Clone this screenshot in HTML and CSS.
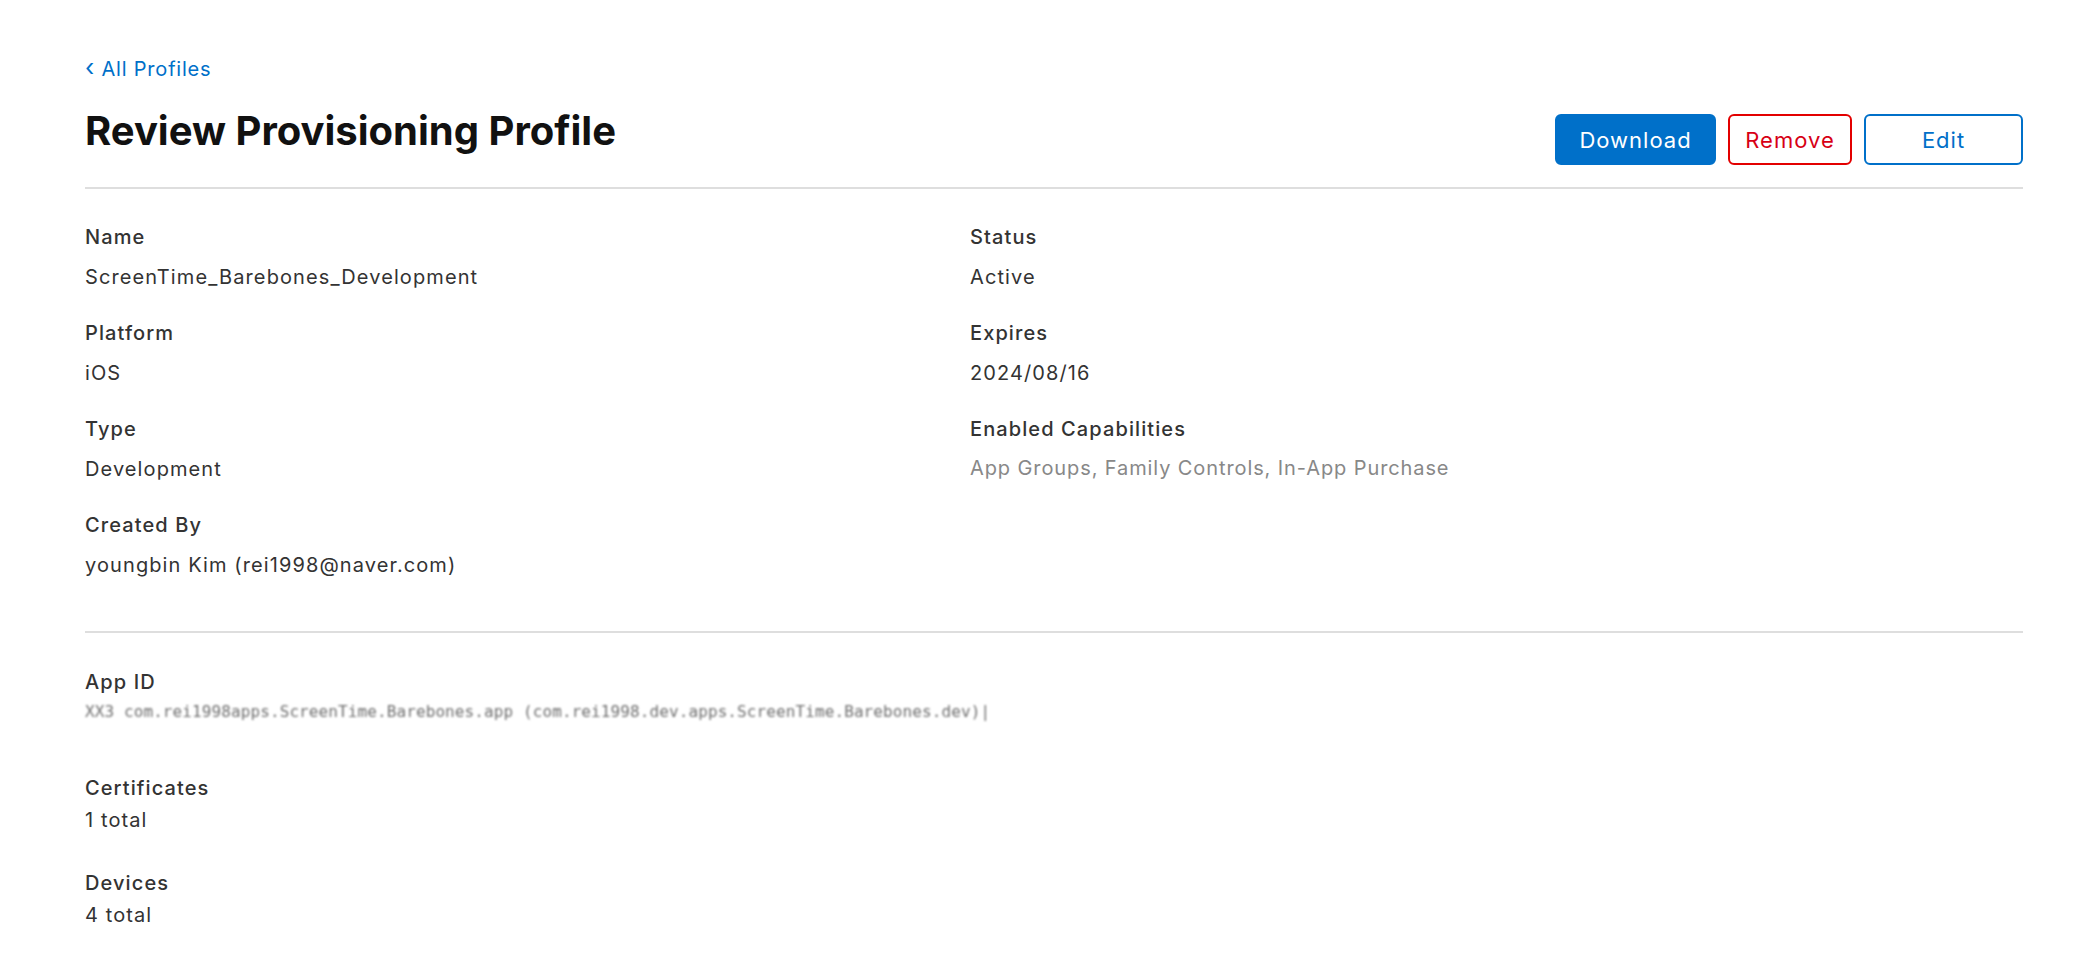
FILE: index.html
```html
<!DOCTYPE html>
<html lang="en">
<head>
<meta charset="utf-8">
<title>Review Provisioning Profile</title>
<link rel="stylesheet" href="styles.css">
</head>
<body>
<main class="page">
  <nav class="back"><a href="#" class="back-link"><span class="chev">&#8249;</span> All Profiles</a></nav>
  <header class="header">
    <h1 class="title">Review Provisioning Profile</h1>
    <div class="actions">
      <button class="btn btn-primary">Download</button>
      <button class="btn btn-danger">Remove</button>
      <button class="btn btn-secondary">Edit</button>
    </div>
  </header>
  <section class="details">
    <div class="col col-left">
      <div class="field"><div class="label">Name</div><div class="value">ScreenTime_Barebones_Development</div></div>
      <div class="field"><div class="label">Platform</div><div class="value">iOS</div></div>
      <div class="field"><div class="label">Type</div><div class="value">Development</div></div>
      <div class="field"><div class="label">Created By</div><div class="value">youngbin Kim (rei1998@naver.com)</div></div>
    </div>
    <div class="col col-right">
      <div class="field"><div class="label">Status</div><div class="value">Active</div></div>
      <div class="field"><div class="label">Expires</div><div class="value">2024/08/16</div></div>
      <div class="field"><div class="label">Enabled Capabilities</div><div class="value value-muted">App Groups, Family Controls, In-App Purchase</div></div>
    </div>
  </section>
  <section class="resources">
    <div class="res res-appid"><div class="label">App ID</div><div class="value value-redacted">XX3 com.rei1998apps.ScreenTime.Barebones.app (com.rei1998.dev.apps.ScreenTime.Barebones.dev)|</div></div>
    <div class="res"><div class="label">Certificates</div><div class="value">1 total</div></div>
    <div class="res"><div class="label">Devices</div><div class="value">4 total</div></div>
  </section>
</main>
</body>
</html>
```

FILE: styles.css
```css
* { box-sizing: border-box; }
html, body { margin: 0; padding: 0; background: #fff; }
body {
  font-family: Inter, "Noto Sans", "Liberation Sans", sans-serif;
  color: #333;
  -webkit-font-smoothing: antialiased;
}
.page {
  padding: 56px 57px 40px 85px;
}
.back {
  height: 24px;
  line-height: 24px;
  font-size: 20px;
  letter-spacing: 0.8px;
}
.back-link {
  color: #0070c9;
  text-decoration: none;
}
.chev {
  font-size: 24px;
  margin-right: 0;
}
.header {
  display: flex;
  justify-content: space-between;
  align-items: flex-start;
  margin-top: 29px;
  padding-bottom: 22px;
  border-bottom: 2px solid #dedede;
}
.title {
  margin: 0;
  font-size: 40px;
  line-height: 44px;
  font-weight: 700;
  color: #111;
  letter-spacing: 0;
}
.actions {
  display: flex;
  gap: 12px;
  margin-top: 5px;
}
.btn {
  height: 51px;
  border-radius: 6px;
  font-family: inherit;
  font-size: 22px;
  letter-spacing: 1px;
  background: #fff;
  border: 2px solid #0070c9;
  color: #0070c9;
  padding: 0 10px;
  cursor: pointer;
}
.btn-primary {
  width: 161px;
  background: #0070c9;
  color: #fff;
}
.btn-danger {
  width: 124px;
  border-color: #e30000;
  color: #d70015;
}
.btn-secondary {
  width: 159px;
}
.details {
  display: grid;
  grid-template-columns: 885px 1fr;
  padding-top: 36px;
  padding-bottom: 22px;
  border-bottom: 2px solid #dedede;
}
.field {
  margin-bottom: 32px;
}
.label {
  font-size: 20px;
  line-height: 24px;
  font-weight: 500;
  letter-spacing: 1.1px;
  color: #333;
}
.value {
  margin-top: 16px;
  font-size: 20px;
  line-height: 24px;
  font-weight: 400;
  letter-spacing: 1.1px;
  color: #333;
}
.value-muted {
  color: #888;
  margin-top: 15px;
  letter-spacing: 0.9px;
}
.resources {
  padding-top: 37px;
}
.res .value {
  margin-top: 8px;
}
.res .value-redacted {
  margin-top: 6px;
}
.res + .res {
  margin-top: 39px;
}
.res-appid + .res {
  margin-top: 52px;
}
.value-redacted {
  color: #6e6e6e;
  font-family: "DejaVu Sans Mono", monospace;
  font-size: 16px;
  letter-spacing: 0.1px;
  filter: blur(0.9px);
}
```
